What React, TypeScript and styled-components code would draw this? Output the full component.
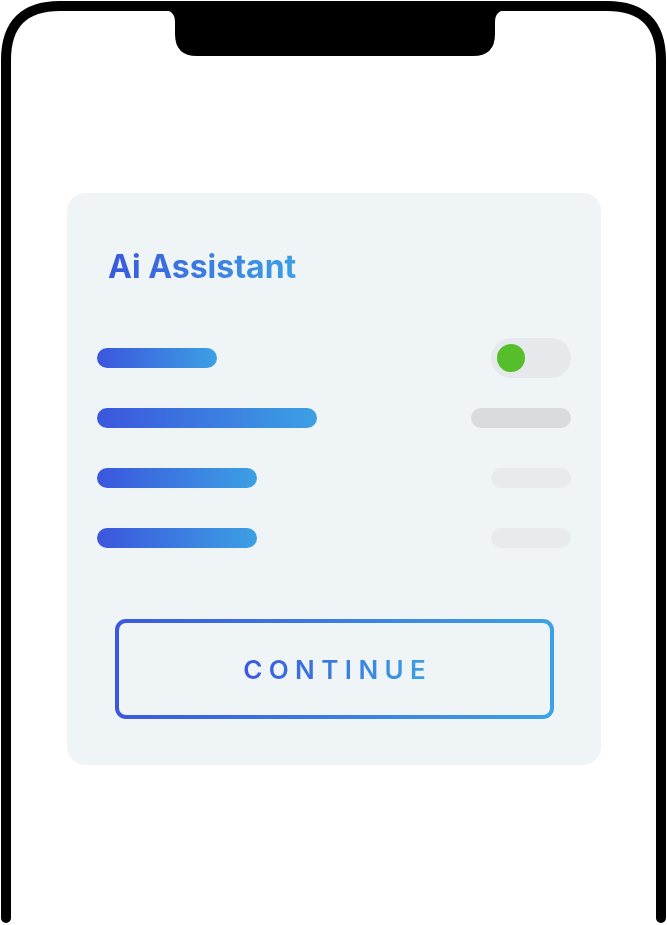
import React from "react";
import styled, { createGlobalStyle } from "styled-components";

const GlobalStyle = createGlobalStyle`
  html, body { margin: 0; padding: 0; background: #ffffff; }
  body { font-family: Inter, "Noto Sans", sans-serif; }
  * { box-sizing: border-box; }
`;

const Phone = styled.div`
  position: relative;
  width: 667px;
  height: 925px;
  padding-top: 193px;
  overflow: hidden;
`;

const FrameArt = styled.svg`
  position: absolute;
  left: 0;
  top: 0;
  pointer-events: none;
`;

const Card = styled.section`
  position: relative;
  margin-left: 67px;
  width: 534px;
  height: 572px;
  background: #eff4f7;
  border-radius: 18px;
  padding: 30px;
  display: flex;
  flex-direction: column;
`;

const Title = styled.h1`
  margin: 24px 0 0 11px;
  font-family: Inter, sans-serif;
  font-weight: 700;
  font-size: 32px;
  line-height: 40px;
  letter-spacing: 0;
  align-self: flex-start;
  background: linear-gradient(90deg, #3a58dd 0%, #3c9fe4 100%);
  -webkit-background-clip: text;
  background-clip: text;
  color: transparent;
`;

const Rows = styled.div`
  margin-top: 51px;
  display: flex;
  flex-direction: column;
  gap: 20px;
`;

const Row = styled.div`
  height: 40px;
  display: flex;
  align-items: center;
  justify-content: space-between;
`;

const Bar = styled.div<{ $w: number }>`
  width: ${(p) => p.$w}px;
  height: 20px;
  border-radius: 10px;
  background: linear-gradient(90deg, #3b56dd 0%, #3ca0e4 100%);
`;

const Placeholder = styled.div<{ $w: number; $c: string }>`
  width: ${(p) => p.$w}px;
  height: 20px;
  border-radius: 10px;
  background: ${(p) => p.$c};
`;

const Toggle = styled.div`
  width: 80px;
  height: 40px;
  border-radius: 20px;
  background: #e6e9ec;
  display: flex;
  align-items: center;
  padding-left: 6px;
`;

const Knob = styled.div`
  width: 28px;
  height: 28px;
  border-radius: 50%;
  background: #56be2a;
`;

const ContinueButton = styled.button`
  margin: 61px 17px 0 18px;
  height: 100px;
  border: 4px solid transparent;
  border-radius: 11px;
  background:
    linear-gradient(#eff4f7, #eff4f7) padding-box,
    linear-gradient(90deg, #3b58dd 0%, #3ca2e5 100%) border-box;
  display: flex;
  align-items: center;
  justify-content: center;
  cursor: pointer;
  padding: 0;
`;

const ButtonLabel = styled.span`
  font-family: Inter, sans-serif;
  font-weight: 600;
  font-size: 26px;
  letter-spacing: 6.4px;
  margin-right: -6.4px;
  background: linear-gradient(90deg, #3a58dd 0%, #3ca0e4 100%);
  -webkit-background-clip: text;
  background-clip: text;
  color: transparent;
`;

const rows = [
  { bar: 120, right: "toggle" as const },
  { bar: 220, right: { w: 100, c: "#d9dcdf" } },
  { bar: 160, right: { w: 80, c: "#e8ebee" } },
  { bar: 160, right: { w: 80, c: "#e8ebee" } },
];

export default function App() {
  return (
    <>
      <GlobalStyle />
      <Phone>
        <FrameArt width="667" height="925" viewBox="0 0 667 925">
          <path
            d="M6 918 L6 60 Q6 6 60 6 L607 6 Q661 6 661 60 L661 918"
            fill="none"
            stroke="#000"
            strokeWidth="10"
            strokeLinecap="round"
          />
          <path
            d="M163 10 Q175 10 175 22 L175 34 Q175 56 197 56 L473 56 Q495 56 495 34 L495 22 Q495 10 507 10 Z"
            fill="#000"
          />
        </FrameArt>
        <Card>
          <Title>Ai Assistant</Title>
          <Rows>
            {rows.map((r, i) => (
              <Row key={i}>
                <Bar $w={r.bar} />
                {r.right === "toggle" ? (
                  <Toggle>
                    <Knob />
                  </Toggle>
                ) : (
                  <Placeholder $w={r.right.w} $c={r.right.c} />
                )}
              </Row>
            ))}
          </Rows>
          <ContinueButton>
            <ButtonLabel>CONTINUE</ButtonLabel>
          </ContinueButton>
        </Card>
      </Phone>
    </>
  );
}
